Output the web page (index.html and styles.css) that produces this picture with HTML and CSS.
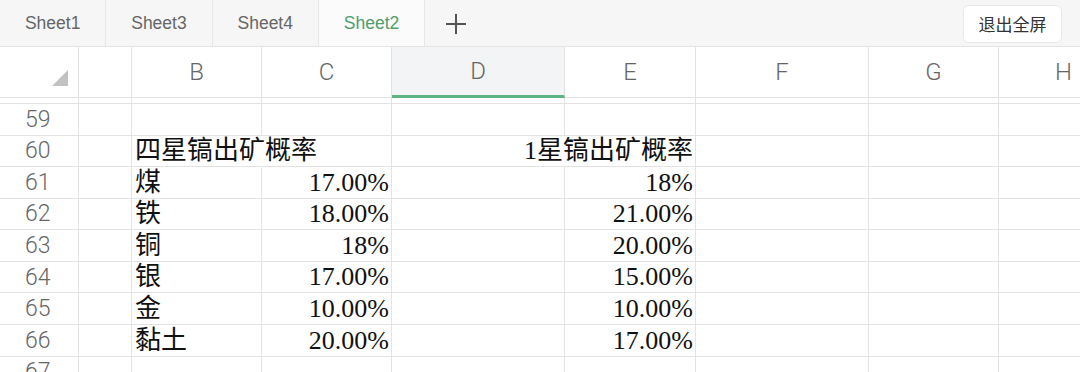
FILE: index.html
```html
<!DOCTYPE html>
<html lang="zh">
<head>
<meta charset="utf-8">
<title>Sheet2</title>
<link rel="stylesheet" href="styles.css">
</head>
<body>
	<div class="tabbar">
		<div class="tab">Sheet1</div>
		<div class="tab">Sheet3</div>
		<div class="tab">Sheet4</div>
		<div class="tab active">Sheet2</div>
		<div class="tab add">
			<svg width="22" height="22" viewBox="0 0 22 22"><path d="M11 1v20M1 11h20" stroke="#555" stroke-width="2" fill="none"/></svg>
		</div>
		<div class="spacer"></div>
		<button class="bt_exit">退出全屏</button>
	</div>

	<div class="sheet">
		<!-- column letters -->
		<div class="row head">
			<div class="cell corner">
				<svg width="16" height="16" viewBox="0 0 16 16"><path d="M16 0V16H0Z" fill="#c2c2c2"/></svg>
			</div>
			<div class="cell"></div>
			<div class="cell">B</div>
			<div class="cell">C</div>
			<div class="cell sel">D</div>
			<div class="cell">E</div>
			<div class="cell">F</div>
			<div class="cell">G</div>
			<div class="cell">H</div>
		</div>
		<!-- bottom edge of row 58 -->
		<div class="row stub">
			<div class="cell rn"></div><div class="cell"></div><div class="cell"></div><div class="cell"></div><div class="cell"></div><div class="cell"></div><div class="cell"></div><div class="cell"></div><div class="cell"></div>
		</div>
		<div class="row">
			<div class="cell rn">59</div><div class="cell"></div><div class="cell"></div><div class="cell"></div><div class="cell"></div><div class="cell"></div><div class="cell"></div><div class="cell"></div><div class="cell"></div>
		</div>
		<div class="row">
			<div class="cell rn">60</div><div class="cell"></div>
			<div class="cell txt spill">四星镐出矿概率</div><div class="cell"></div>
			<div class="cell spill"></div><div class="cell num">1星镐出矿概率</div>
			<div class="cell"></div><div class="cell"></div><div class="cell"></div>
		</div>
		<div class="row">
			<div class="cell rn">61</div><div class="cell"></div>
			<div class="cell txt">煤</div><div class="cell num">17.00%</div>
			<div class="cell"></div><div class="cell num">18%</div>
			<div class="cell"></div><div class="cell"></div><div class="cell"></div>
		</div>
		<div class="row">
			<div class="cell rn">62</div><div class="cell"></div>
			<div class="cell txt">铁</div><div class="cell num">18.00%</div>
			<div class="cell"></div><div class="cell num">21.00%</div>
			<div class="cell"></div><div class="cell"></div><div class="cell"></div>
		</div>
		<div class="row">
			<div class="cell rn">63</div><div class="cell"></div>
			<div class="cell txt">铜</div><div class="cell num">18%</div>
			<div class="cell"></div><div class="cell num">20.00%</div>
			<div class="cell"></div><div class="cell"></div><div class="cell"></div>
		</div>
		<div class="row">
			<div class="cell rn">64</div><div class="cell"></div>
			<div class="cell txt">银</div><div class="cell num">17.00%</div>
			<div class="cell"></div><div class="cell num">15.00%</div>
			<div class="cell"></div><div class="cell"></div><div class="cell"></div>
		</div>
		<div class="row">
			<div class="cell rn">65</div><div class="cell"></div>
			<div class="cell txt">金</div><div class="cell num">10.00%</div>
			<div class="cell"></div><div class="cell num">10.00%</div>
			<div class="cell"></div><div class="cell"></div><div class="cell"></div>
		</div>
		<div class="row">
			<div class="cell rn">66</div><div class="cell"></div>
			<div class="cell txt">黏土</div><div class="cell num">20.00%</div>
			<div class="cell"></div><div class="cell num">17.00%</div>
			<div class="cell"></div><div class="cell"></div><div class="cell"></div>
		</div>
		<div class="row">
			<div class="cell rn">67</div><div class="cell"></div><div class="cell"></div><div class="cell"></div><div class="cell"></div><div class="cell"></div><div class="cell"></div><div class="cell"></div><div class="cell"></div>
		</div>
	</div>
</body>
</html>
```

FILE: styles.css
```css
body {
	margin: 0;
	background: #fff;
	font: 17px "Liberation Sans", Arial, "Noto Sans CJK SC", sans-serif;
	overflow: hidden;
}

/* sheet tabs */
.tabbar {
	display: flex;
	align-items: center;
	height: 47px;
	box-sizing: border-box;
	background: #f6f6f6;
	border-bottom: 1px solid #e4e4e4;
}
.tab {
	width: 106.3px;
	height: 46px;
	box-sizing: border-box;
	border-right: 1px solid #e6e6e6;
	display: flex;
	align-items: center;
	justify-content: center;
	padding-top: 1px;
	color: #666;
	font-size: 17.5px;
}
.tab.active {
	background: #fbfbfb;
	color: #4e9e6e;
}
.tab.add {
	width: 62px;
	border-right: none;
}
.spacer {
	flex: 1;
}
.bt_exit {
	height: 38px;
	width: 99px;
	margin: 1px 18px 0 0;
	padding: 0;
	background: #fff;
	border: 1px solid #e8e8e8;
	border-radius: 6px;
	color: #333;
	font: 17px "Noto Sans CJK SC", sans-serif;
}

/* grid */
.sheet {
	width: 1129px;
}
.row {
	display: grid;
	grid-template-columns: 79px 53px 130px 130px 173px 131px 173px 130px 130px;
	height: 31.57px;
}
.cell {
	box-sizing: border-box;
	border-right: 1px solid #e3e3e3;
	border-bottom: 1px solid #e3e3e3;
	display: flex;
	align-items: flex-end;
	white-space: nowrap;
	font: 26px/30px "Liberation Serif", "Noto Sans CJK SC", serif;
	color: #111;
	min-width: 0;
}
.cell.txt {
	padding-left: 3px;
}
.cell.num {
	justify-content: flex-end;
	padding-right: 2px;
}
.cell.spill {
	border-right-color: transparent;
}
.cell.rn {
	align-items: center;
	padding-left: 25px;
	font: 300 23px Roboto, "Liberation Sans", sans-serif;
	color: #666;
}

/* column letters */
.row.head {
	height: 51px;
}
.head .cell {
	align-items: center;
	justify-content: center;
	font: 300 24px Roboto, "Liberation Sans", sans-serif;
	color: #666;
	background: #fff;
}
.head .cell.corner {
	justify-content: flex-end;
	align-items: flex-end;
	padding: 0 10px 11px 0;
}
.head .cell.sel {
	background: #f3f4f5;
	border-bottom: 3px solid #5db482;
}
.row.stub {
	height: 6px;
}
```
